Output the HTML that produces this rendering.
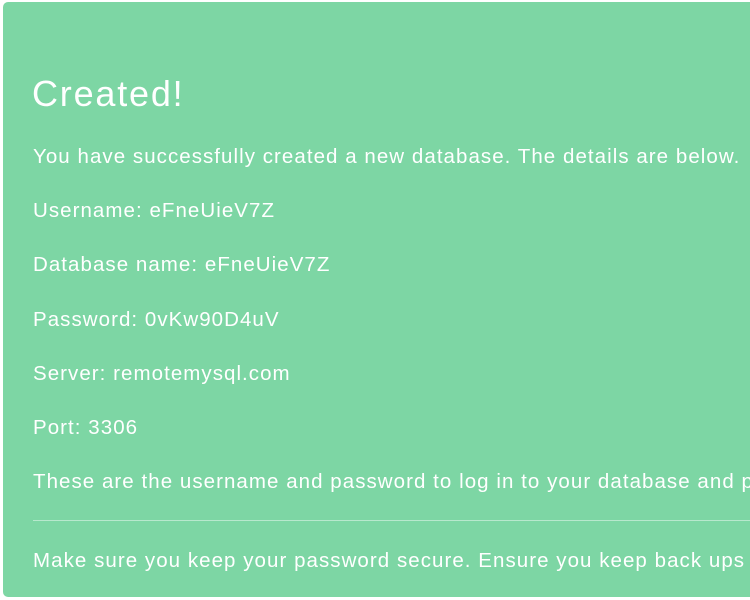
<!DOCTYPE html>
<html><head><style>
html,body{margin:0;padding:0;background:#fff;width:750px;height:600px;overflow:hidden}
.box{position:absolute;left:3px;top:2px;width:760px;height:595px;background:#7dd6a4;border-radius:5px;overflow:hidden;color:#fff;font-family:"Liberation Sans",sans-serif}
.t{position:absolute;left:30px;white-space:nowrap;font-size:20.5px;letter-spacing:1.05px;line-height:24px}
h1{position:absolute;left:29px;top:70px;margin:0;font-weight:normal;font-size:36px;line-height:44px;letter-spacing:1.8px;white-space:nowrap}
hr{position:absolute;left:30px;top:518px;width:740px;margin:0;border:0;border-top:1px solid rgba(255,255,255,0.45)}
</style></head><body>
<div class="box">
<h1>Created!</h1>
<div class="t" style="top:143px">You have successfully created a new database. The details are below.</div>
<div class="t" style="top:197px">Username: eFneUieV7Z</div>
<div class="t" style="top:251px">Database name: eFneUieV7Z</div>
<div class="t" style="top:306px">Password: 0vKw90D4uV</div>
<div class="t" style="top:360px">Server: remotemysql.com</div>
<div class="t" style="top:414px">Port: 3306</div>
<div class="t" style="top:468px">These are the username and password to log in to your database and phpMyAdmin</div>
<hr>
<div class="t" style="top:547px">Make sure you keep your password secure. Ensure you keep back ups of your database.</div>
</div>
</body></html>
